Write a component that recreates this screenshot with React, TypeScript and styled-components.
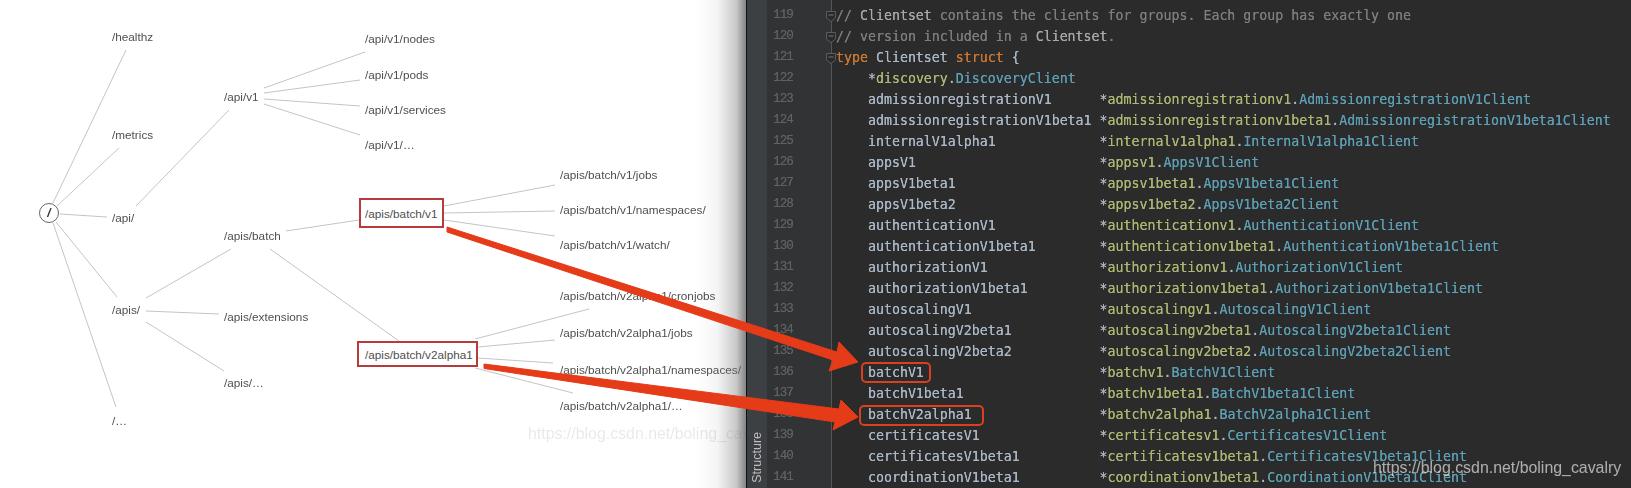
import React from 'react';
import styled, { createGlobalStyle } from 'styled-components';

const GlobalStyle = createGlobalStyle`
  html, body {
    margin: 0;
    padding: 0;
    background: #fff;
  }
`;

const Page = styled.div`
  position: relative;
  display: flex;
  width: 1631px;
  height: 488px;
  overflow: hidden;
`;

/* left half: the API tree */
const DiagramPanel = styled.div`
  position: relative;
  flex: 0 0 746px;
  overflow: hidden;
  background: #fff;

  &::after {
    content: '';
    position: absolute;
    top: 0;
    right: 0;
    bottom: 0;
    width: 48px;
    background: linear-gradient(to right, rgba(120, 120, 120, 0), rgba(120, 120, 120, 0.08) 40%, rgba(110, 110, 110, 0.38) 80%, rgba(90, 90, 90, 0.75));
  }
`;

const DiagramCanvas = styled.div`
  position: absolute;
  inset: 0;
  filter: blur(0.45px);
  font-family: 'Liberation Sans', Arial, sans-serif;
  font-size: 11.75px;
  color: #4f4f4f;
`;

const Edges = styled.svg`
  position: absolute;
  inset: 0;
`;

const Node = styled.span<{ $x: number; $y: number }>`
  position: absolute;
  left: ${p => p.$x}px;
  top: ${p => p.$y - 8}px;
  height: 16px;
  line-height: 16px;
  white-space: nowrap;
`;

const NodeBox = styled.div<{ $x: number; $y: number; $w: number; $h: number }>`
  position: absolute;
  left: ${p => p.$x}px;
  top: ${p => p.$y}px;
  width: ${p => p.$w}px;
  height: ${p => p.$h}px;
  box-sizing: border-box;
  display: flex;
  align-items: center;
  padding-left: ${p => 365 - p.$x - 2}px;
  border: 2px solid #b63c3c;
  background: #fff;
  white-space: nowrap;
`;

const RootNode = styled.div`
  position: absolute;
  left: 39px;
  top: 203px;
  width: 20px;
  height: 20px;
  box-sizing: border-box;
  display: flex;
  align-items: center;
  justify-content: center;
  border: 1px solid #666;
  border-radius: 50%;
  background: #fff;
  font-size: 12px;
  font-weight: 700;
  font-style: italic;
  color: #333;
`;

const WatermarkLight = styled.span`
  position: absolute;
  left: 528px;
  top: 425px;
  white-space: nowrap;
  font-size: 15.9px;
  color: rgba(0, 0, 0, 0.09);
`;

/* right half: the IDE */
const EditorPanel = styled.div`
  flex: 1;
  display: flex;
  border-left: 1px solid #111;
  background: #2b2b2b;
  filter: blur(0.3px);
  font-family: 'DejaVu Sans Mono', 'Liberation Mono', monospace;
`;

const ToolStrip = styled.div`
  flex: 0 0 20px;
  display: flex;
  justify-content: center;
  align-items: flex-end;
  padding-bottom: 5px;
  box-sizing: border-box;
  background: #3c4043;
`;

const ToolTab = styled.span`
  writing-mode: vertical-rl;
  transform: rotate(180deg);
  font-family: 'Liberation Sans', Arial, sans-serif;
  font-size: 12.5px;
  color: #bdbdbd;
`;

const Gutter = styled.div`
  flex: 0 0 65px;
  padding: 5px 0 0 6px;
  box-sizing: border-box;
  background: #313335;
  border-right: 1px solid #555;
`;

const LineNo = styled.div`
  height: 21px;
  line-height: 21px;
  font-family: 'Liberation Mono', monospace;
  font-size: 12.6px;
  letter-spacing: -0.9px;
  color: #606366;
  text-shadow: 0 0 0.6px rgba(96, 99, 102, 0.7);
`;

const CodeColumn = styled.div`
  flex: 1;
  padding: 5px 0 0 4px;
`;

const CodeLine = styled.div`
  position: relative;
  height: 21px;
  line-height: 21px;
  white-space: pre;
  font-size: 13.28px;
  color: #a9b7c6;
  text-shadow: 0 0 0.5px currentColor;
`;

const FoldMark = styled.svg`
  position: absolute;
  left: -10px;
  top: 6px;
`;

const Comment = styled.span`
  color: #7d7d7d;
`;

const CommentRef = styled.span`
  color: #a8a8a8;
`;

const Keyword = styled.span`
  color: #cc7832;
`;

const Package = styled.span`
  color: #adb772;
`;

const ClassName = styled.span`
  color: #5d9fb5;
`;

const FieldName = styled.span`
  position: relative;
`;

const FieldMark = styled.span<{ $l: number; $r: number; $t: number; $b: number }>`
  position: absolute;
  left: ${p => p.$l}px;
  right: ${p => p.$r}px;
  top: ${p => p.$t}px;
  bottom: ${p => p.$b}px;
  border: 2px solid #d8401f;
  border-radius: 5px;
`;

const WatermarkDark = styled.span`
  position: absolute;
  left: 1373px;
  top: 459px;
  white-space: nowrap;
  font-family: 'Liberation Sans', Arial, sans-serif;
  font-size: 15.9px;
  color: rgba(255, 255, 255, 0.62);
`;

const ArrowLayer = styled.svg`
  position: absolute;
  inset: 0;
  pointer-events: none;
`;

const nodes: [string, number, number][] = [
  ['/healthz', 112, 37],
  ['/metrics', 112, 135],
  ['/api/', 112, 218],
  ['/apis/', 112, 310],
  ['/…', 112, 421],
  ['/api/v1', 224, 97],
  ['/apis/batch', 224, 236],
  ['/apis/extensions', 224, 317],
  ['/apis/…', 224, 383],
  ['/api/v1/nodes', 365, 39],
  ['/api/v1/pods', 365, 75],
  ['/api/v1/services', 365, 110],
  ['/api/v1/…', 365, 145],
  ['/apis/batch/v1/jobs', 560, 175],
  ['/apis/batch/v1/namespaces/', 560, 210],
  ['/apis/batch/v1/watch/', 560, 245],
  ['/apis/batch/v2alpha1/cronjobs', 560, 296],
  ['/apis/batch/v2alpha1/jobs', 560, 333],
  ['/apis/batch/v2alpha1/namespaces/', 560, 370],
  ['/apis/batch/v2alpha1/…', 560, 406],
];

const edges: [number, number, number, number][] = [
  [53, 203, 126, 50],
  [57, 206, 119, 148],
  [60, 214, 107, 217],
  [56, 222, 117, 297],
  [53, 223, 116, 407],
  [136, 206, 229, 110],
  [264, 88, 365, 52],
  [264, 93, 360, 80],
  [264, 99, 360, 106],
  [264, 104, 360, 135],
  [146, 298, 231, 249],
  [146, 311, 219, 314],
  [146, 322, 224, 371],
  [286, 231, 359, 220],
  [270, 249, 399, 341],
  [444, 206, 555, 185],
  [444, 213, 555, 211],
  [444, 220, 555, 236],
  [475, 339, 589, 309],
  [478, 347, 555, 340],
  [478, 358, 553, 363],
  [475, 368, 573, 393],
];

const fields = [
  'admissionregistrationV1',
  'admissionregistrationV1beta1',
  'internalV1alpha1',
  'appsV1',
  'appsV1beta1',
  'appsV1beta2',
  'authenticationV1',
  'authenticationV1beta1',
  'authorizationV1',
  'authorizationV1beta1',
  'autoscalingV1',
  'autoscalingV2beta1',
  'autoscalingV2beta2',
  'batchV1',
  'batchV1beta1',
  'batchV2alpha1',
  'certificatesV1',
  'certificatesV1beta1',
  'coordinationV1beta1',
];

// offsets of the hand-drawn boxes around a field name: left, right, top, bottom
const marks: Record<string, [number, number, number, number]> = {
  batchV1: [-7, -7, -3, -3],
  batchV2alpha1: [-9, -12, -2, -4],
};

const Fold: React.FC = () => (
  <FoldMark width="10" height="11" viewBox="0 0 10 11">
    <path d="M0.5 0.5H9.5V7L5 10.5L0.5 7Z" fill="#2b2b2b" stroke="#5c5c5c" />
    <path d="M2.5 4H7.5" stroke="#777" />
  </FoldMark>
);

const FieldRow: React.FC<{ name: string }> = ({ name }) => {
  const pkg = name.replace('V', 'v');
  const cls = name[0].toUpperCase() + name.slice(1) + 'Client';
  const mark = marks[name];
  return (
    <CodeLine>
      {'    '}
      <FieldName>
        {name}
        {mark && <FieldMark $l={mark[0]} $r={mark[1]} $t={mark[2]} $b={mark[3]} />}
      </FieldName>
      {' '.repeat(29 - name.length)}*<Package>{pkg}</Package>.<ClassName>{cls}</ClassName>
    </CodeLine>
  );
};

const App: React.FC = () => {
  const lineNumbers = Array.from({ length: 23 }, (_, i) => 119 + i);

  return (
    <Page>
      <GlobalStyle />
      <DiagramPanel>
        <DiagramCanvas>
          <Edges width="746" height="488">
            {edges.map(([x1, y1, x2, y2], i) => (
              <line key={i} x1={x1} y1={y1} x2={x2} y2={y2} stroke="#c4c4c4" strokeWidth="1" />
            ))}
          </Edges>
          <RootNode>/</RootNode>
          <NodeBox $x={359} $y={198} $w={85} $h={30}>/apis/batch/v1</NodeBox>
          <NodeBox $x={357} $y={341} $w={121} $h={26}>/apis/batch/v2alpha1</NodeBox>
          {nodes.map(([label, x, y]) => (
            <Node key={label} $x={x} $y={y}>{label}</Node>
          ))}
          <WatermarkLight>https://blog.csdn.net/boling_cavalry</WatermarkLight>
        </DiagramCanvas>
      </DiagramPanel>

      <EditorPanel>
        <ToolStrip>
          <ToolTab>Structure</ToolTab>
        </ToolStrip>
        <Gutter>
          {lineNumbers.map(n => (
            <LineNo key={n}>{n}</LineNo>
          ))}
        </Gutter>
        <CodeColumn>
          <CodeLine>
            <Fold />
            <Comment>// <CommentRef>Clientset</CommentRef> contains the clients for groups. Each group has exactly one</Comment>
          </CodeLine>
          <CodeLine>
            <Fold />
            <Comment>// version included in a <CommentRef>Clientset</CommentRef>.</Comment>
          </CodeLine>
          <CodeLine>
            <Fold />
            <Keyword>type</Keyword> Clientset <Keyword>struct</Keyword> {'{'}
          </CodeLine>
          <CodeLine>
            {'    '}*<Package>discovery</Package>.<ClassName>DiscoveryClient</ClassName>
          </CodeLine>
          {fields.map(name => (
            <FieldRow key={name} name={name} />
          ))}
        </CodeColumn>
      </EditorPanel>

      <WatermarkDark>https://blog.csdn.net/boling_cavalry</WatermarkDark>

      <ArrowLayer width="1631" height="488">
        <polygon
          points="447,227 837,352 839,342 858,362 829,371 833,360 447,232"
          fill="#e53b19"
          stroke="#e53b19"
          strokeWidth="1"
          strokeLinejoin="round"
        />
        <polygon
          points="484,364 839,409 841,400 858,417 833,430 835,422 484,368.5"
          fill="#e53b19"
          stroke="#e53b19"
          strokeWidth="1"
          strokeLinejoin="round"
        />
      </ArrowLayer>
    </Page>
  );
};

export default App;
